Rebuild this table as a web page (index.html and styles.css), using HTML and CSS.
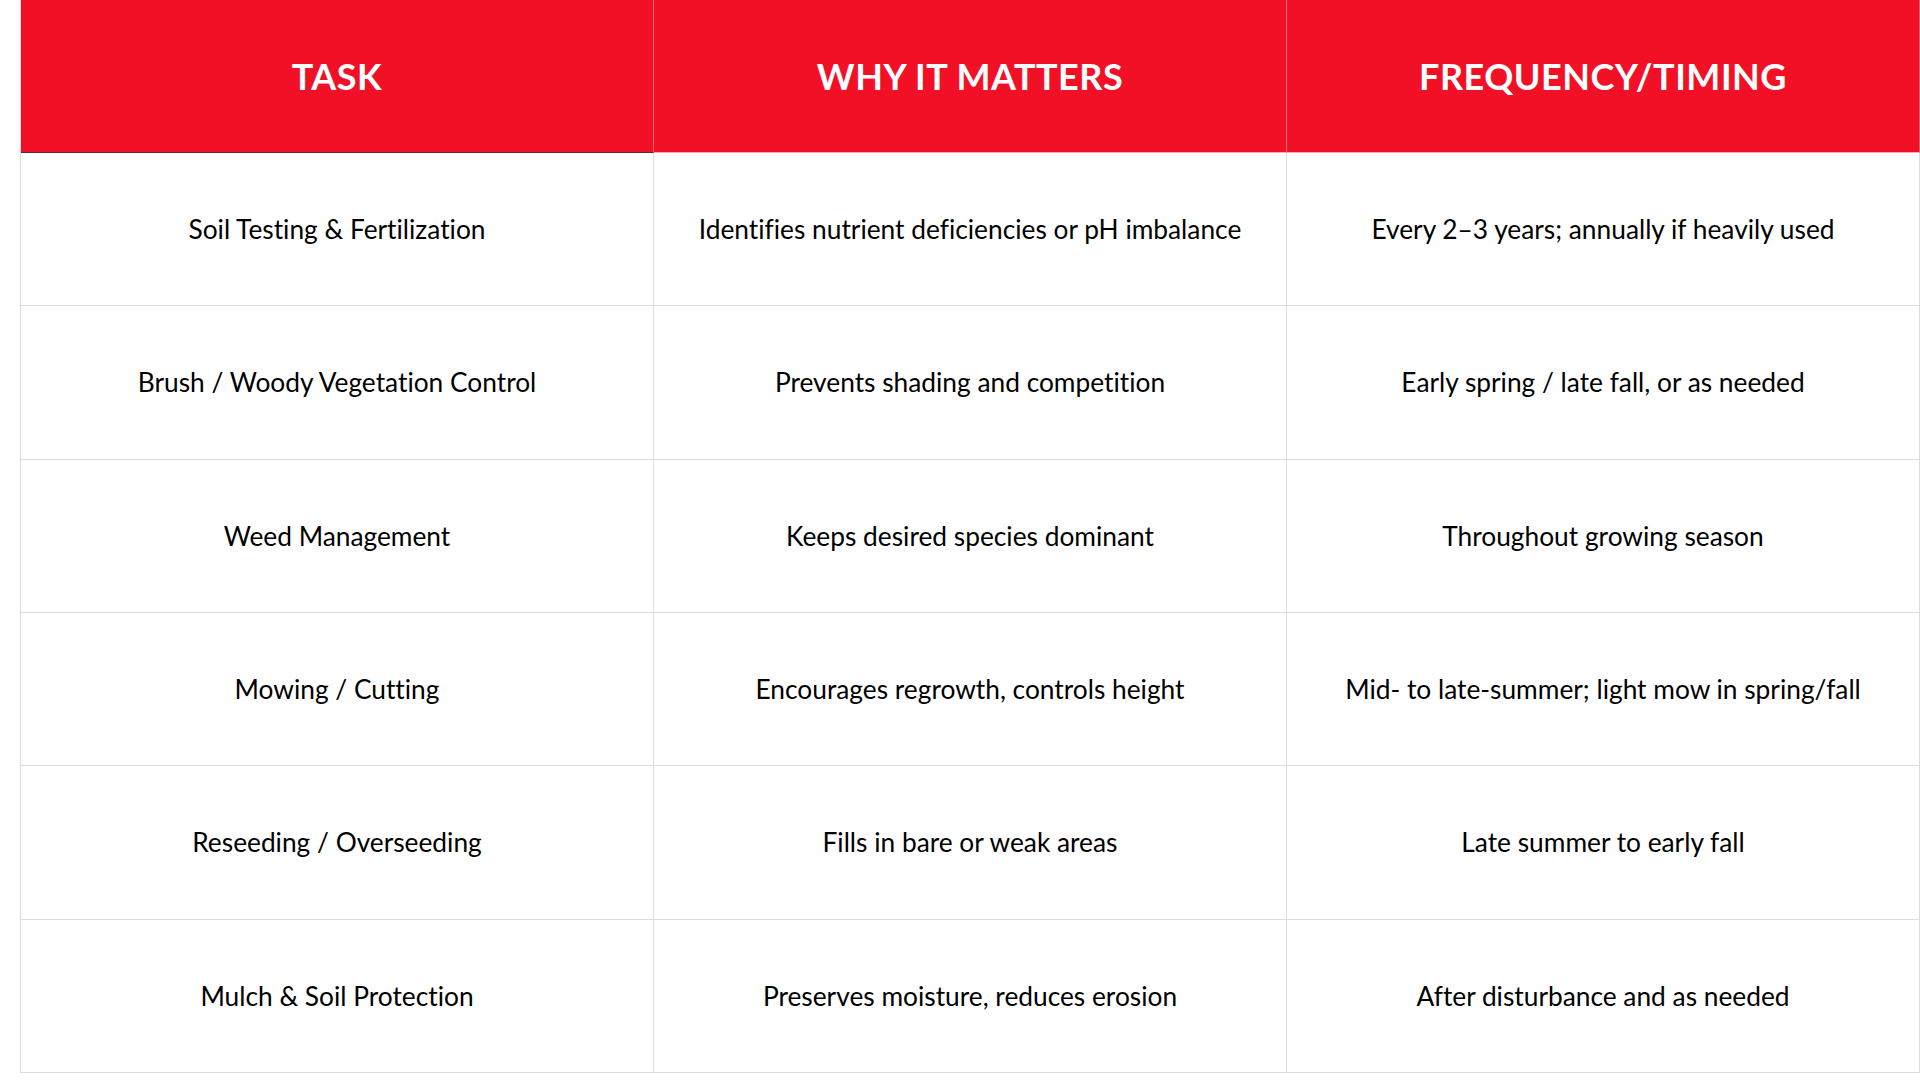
FILE: index.html
```html
<!DOCTYPE html>
<html lang="en">
<head>
<meta charset="utf-8">
<title>Maintenance Tasks</title>
<link rel="stylesheet" href="styles.css">
</head>
<body>
<div class="table">
  <div class="cell head first">TASK</div>
  <div class="cell head">WHY IT MATTERS</div>
  <div class="cell head">FREQUENCY/TIMING</div>

  <div class="cell">Soil Testing &amp; Fertilization</div>
  <div class="cell">Identifies nutrient deficiencies or pH imbalance</div>
  <div class="cell">Every 2–3 years; annually if heavily used</div>

  <div class="cell">Brush / Woody Vegetation Control</div>
  <div class="cell">Prevents shading and competition</div>
  <div class="cell">Early spring / late fall, or as needed</div>

  <div class="cell">Weed Management</div>
  <div class="cell">Keeps desired species dominant</div>
  <div class="cell">Throughout growing season</div>

  <div class="cell">Mowing / Cutting</div>
  <div class="cell">Encourages regrowth, controls height</div>
  <div class="cell">Mid- to late-summer; light mow in spring/fall</div>

  <div class="cell">Reseeding / Overseeding</div>
  <div class="cell">Fills in bare or weak areas</div>
  <div class="cell">Late summer to early fall</div>

  <div class="cell">Mulch &amp; Soil Protection</div>
  <div class="cell">Preserves moisture, reduces erosion</div>
  <div class="cell">After disturbance and as needed</div>
</div>
</body>
</html>
```

FILE: styles.css
```css
html, body {
  margin: 0;
  padding: 0;
  background: #ffffff;
}

body {
  padding-left: 20px;
  font-family: Lato, "Open Sans", "Liberation Sans", sans-serif;
  font-variant-ligatures: none;
}

.table {
  width: 1900px;
  display: grid;
  grid-template-columns: repeat(3, 1fr);
  grid-template-rows: 153px repeat(6, 153.33px);
  border-left: 1px solid #dcdcdc;
  box-sizing: border-box;
}

.cell {
  display: flex;
  align-items: center;
  justify-content: center;
  text-align: center;
  border-right: 1px solid #dcdcdc;
  border-bottom: 1px solid #dcdcdc;
  color: #000000;
  font-size: 26.3px;
  box-sizing: border-box;
}

.head {
  background: #f21026;
  color: #ffffff;
  font-weight: 700;
  font-size: 36px;
  letter-spacing: 0.5px;
  border-right: 1px solid #f56b78;
  border-bottom: 1px solid #f3aab1;
}

.head.first {
  border-bottom-color: #5a2a2e;
}
```
